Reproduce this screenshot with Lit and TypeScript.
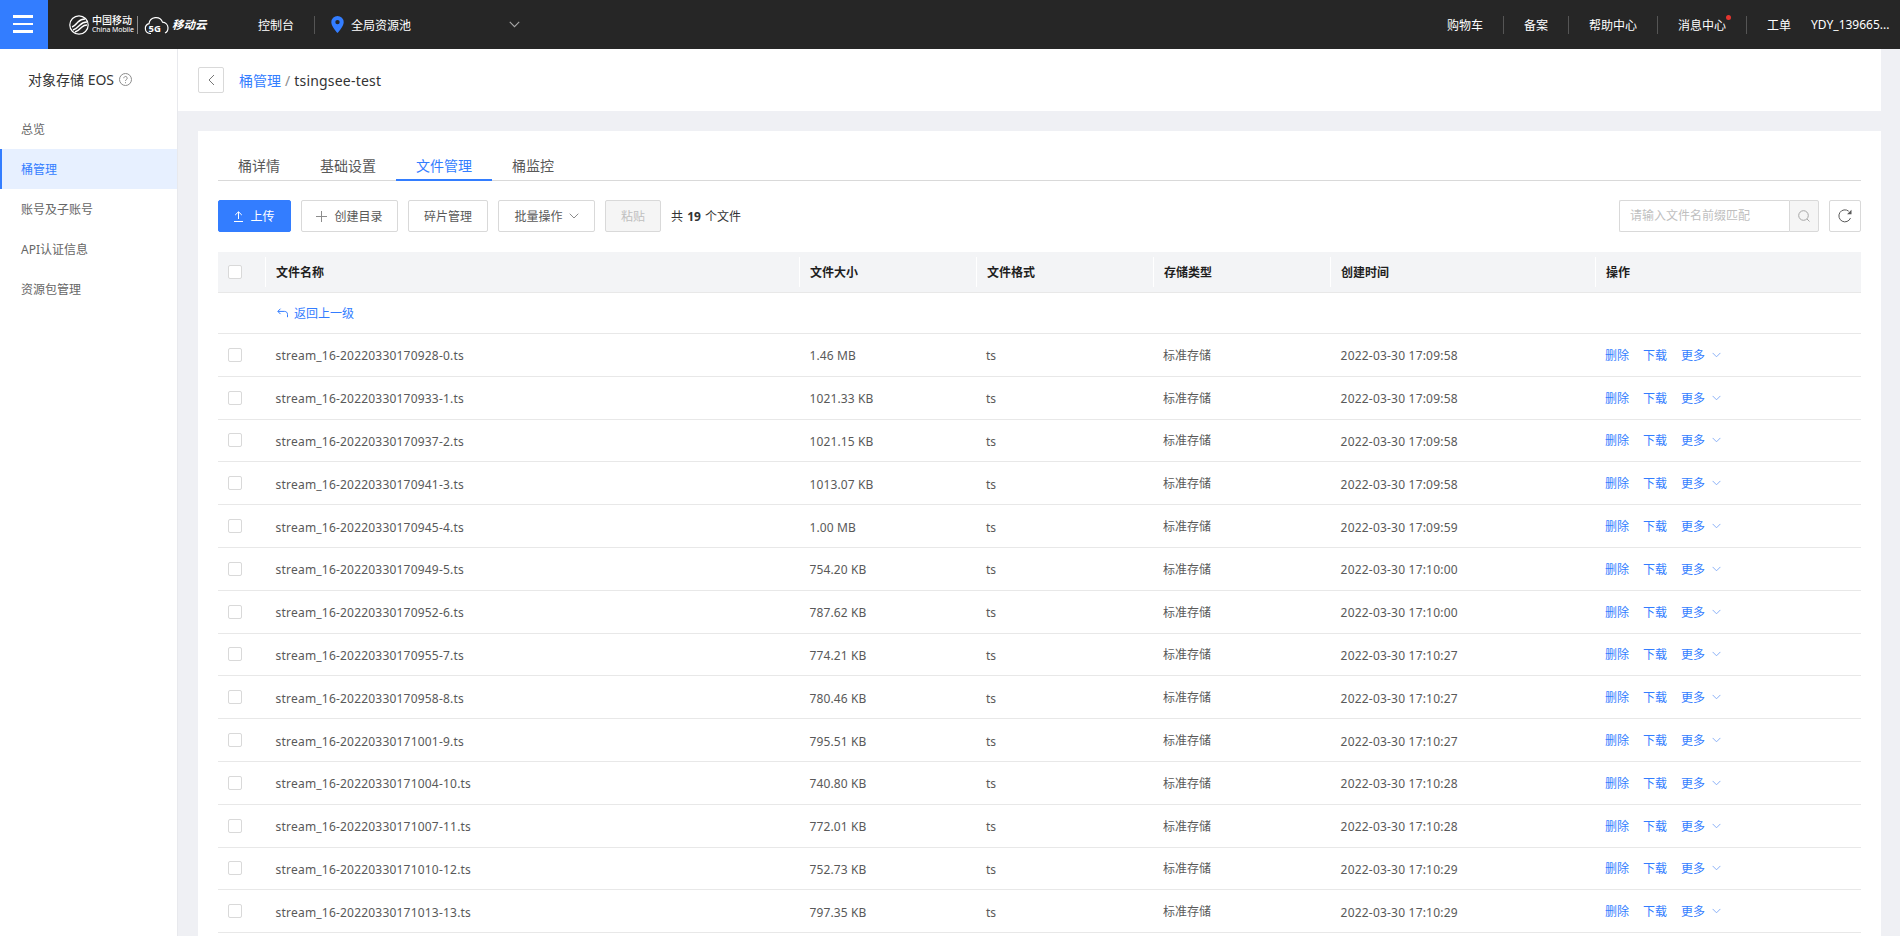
import { LitElement, html, css } from "lit";
import { customElement } from "lit/decorators.js";

const chevron = (cls: string) => html`<svg class=${cls} viewBox="0 0 10 6" fill="none" stroke="currentColor" stroke-width="1"><path d="M.7.7 5 5l4.3-4.3"/></svg>`;

const rows: [string, string, string][] = [
  ["170928-0", "1.46 MB", "17:09:58"],
  ["170933-1", "1021.33 KB", "17:09:58"],
  ["170937-2", "1021.15 KB", "17:09:58"],
  ["170941-3", "1013.07 KB", "17:09:58"],
  ["170945-4", "1.00 MB", "17:09:59"],
  ["170949-5", "754.20 KB", "17:10:00"],
  ["170952-6", "787.62 KB", "17:10:00"],
  ["170955-7", "774.21 KB", "17:10:27"],
  ["170958-8", "780.46 KB", "17:10:27"],
  ["171001-9", "795.51 KB", "17:10:27"],
  ["171004-10", "740.80 KB", "17:10:28"],
  ["171007-11", "772.01 KB", "17:10:28"],
  ["171010-12", "752.73 KB", "17:10:29"],
  ["171013-13", "797.35 KB", "17:10:29"],
];

@customElement("app-root")
export class AppRoot extends LitElement {
  static styles = css`
    :host {
      display: block;
      height: 936px;
      overflow: hidden;
      font-family: "Noto Sans", "Noto Sans CJK SC", sans-serif;
      font-size: 12px;
      color: #595959;
      background: #eff0f4;
    }
    * { box-sizing: border-box; }
    svg { display: block; flex: none; }

    .top { height: 49px; background: #262626; display: flex; align-items: center; color: #fff; }
    .menu { width: 48px; height: 49px; background: #337dff; display: flex; flex-direction: column; gap: 5px; padding: 15px 0 0 13px; flex: none; }
    .menu i { display: block; width: 20px; height: 2.5px; background: #fff; }
    .logo { display: flex; align-items: center; margin-left: 21px; width: 189px; flex: none; }
    .cm { margin-left: 3px; width: 42px; display: flex; flex-direction: column; line-height: 1; }
    .cm b { font-size: 10px; font-weight: 500; line-height: 11px; white-space: nowrap; }
    .cm span { font-size: 7px; line-height: 8px; white-space: nowrap; letter-spacing: -0.1px; }
    .lg-sep { width: 1px; height: 18px; background: #8a8a8a; margin: 0 6px 0 3px; flex: none; }
    .yun { font-size: 11.5px; font-weight: 700; font-style: italic; margin-left: 2px; white-space: nowrap; line-height: 1; }
    .tsep { width: 1px; height: 18px; background: #555; flex: none; }
    .console { width: 56px; flex: none; white-space: nowrap; }
    .region { display: flex; align-items: center; margin-left: 16px; width: 179px; flex: none; white-space: nowrap; }
    .region span { margin-left: 7px; }
    .region .chev { width: 11px; height: 7px; margin-left: 98px; color: #a8a8a8; }
    .top-right { margin-left: auto; display: flex; align-items: center; width: 473px; flex: none; white-space: nowrap; }
    .top-right .t { padding: 0 20px; position: relative; }
    .top-right .dot { position: absolute; right: 15px; top: -1px; width: 5px; height: 5px; border-radius: 50%; background: #e5352f; }
    .top-right .user { padding: 0; }

    .body { display: flex; height: 887px; }
    .side { width: 178px; flex: none; background: #fff; border-right: 1px solid #e8e9ed; }
    .side-title { height: 60px; padding: 0 0 0 28px; display: flex; align-items: center; font-size: 14px; color: #333; }
    .side-title svg { margin-left: 5px; }
    .nav { height: 40px; line-height: 41px; padding-left: 21px; color: #666; }
    .nav.on { background: #e7f0ff; color: #337dff; border-left: 2px solid #337dff; padding-left: 19px; }

    .main { flex: 1; min-width: 0; padding-right: 19px; }
    .crumb { height: 62px; background: #fff; display: flex; align-items: center; padding-left: 20px; font-size: 14px; color: #333; }
    .back { width: 26px; height: 26px; border: 1px solid #d9d9d9; border-radius: 2px; display: flex; align-items: center; justify-content: center; color: #777; margin-right: 15px; }
    .crumb a { color: #337dff; }
    .crumb em { font-style: normal; color: #8c8c8c; margin: 0 4px; }
    .crumb span { letter-spacing: 0.2px; }

    .card { margin: 20px 0 0 20px; background: #fff; padding: 20px 20px 0; height: 900px; }
    .tabs { display: flex; height: 30px; border-bottom: 1px solid #d9d9d9; font-size: 14px; color: #595959; }
    .tab { padding: 0 20px; line-height: 30px; height: 30px; margin-bottom: -1px; }
    .tab.on { color: #337dff; border-bottom: 2px solid #337dff; }

    .tools { display: flex; align-items: center; margin-top: 19px; height: 32px; }
    .btn { height: 32px; display: flex; align-items: center; justify-content: center; border: 1px solid #d9d9d9; border-radius: 2px; margin-right: 10px; color: #595959; background: #fff; flex: none; }
    .btn.up { width: 73px; background: #337dff; border-color: #337dff; color: #fff; }
    .btn.up svg { margin-right: 7px; }
    .btn.mk { width: 97px; }
    .btn.mk svg { margin-right: 7px; }
    .btn.frag { width: 80px; }
    .btn.batch { width: 97px; }
    .btn.batch .chev { width: 10px; height: 6px; margin-left: 6px; color: #8c8c8c; }
    .btn.paste { width: 56px; background: #f5f5f5; color: #bfbfbf; }
    .count { color: #333; white-space: nowrap; word-spacing: 1px; }
    .count b { font-weight: 700; }
    .search { margin-left: auto; display: flex; height: 32px; }
    .search .in { width: 170px; border: 1px solid #d9d9d9; border-right: 0; border-radius: 2px 0 0 2px; color: #bfbfbf; line-height: 30px; padding-left: 10px; }
    .search .go { width: 30px; border: 1px solid #d9d9d9; border-radius: 0 2px 2px 0; background: #f5f5f5; display: flex; align-items: center; justify-content: center; color: #a6a6a6; }
    .refresh { width: 32px; height: 32px; margin-left: 10px; border: 1px solid #d9d9d9; border-radius: 2px; display: flex; align-items: center; justify-content: center; color: #595959; }

    .table { margin-top: 20px; }
    .tr { display: grid; grid-template-columns: 47px 534px 177px 177px 177px 265px 266px; align-items: center; border-bottom: 1px solid #e8e8e8; height: 42.8px; }
    .tr > * { padding-left: 10px; white-space: nowrap; }
    .tr.head { height: 41px; background: #f3f4f6; color: #1f1f1f; font-weight: 700; }
    .tr.head > * + * { border-left: 1px solid #fff; height: 30px; line-height: 31px; }
    .tr.up-row { height: 41px; }
    .tr > .name, .tr > .date, .tr > .size { padding-left: 10.6px; padding-top: 2px; }
    .tr > .fmt { padding-top: 2px; }
    .name, .date { letter-spacing: 0.2px; }
    .size { letter-spacing: 0.1px; }
    .box { display: block; width: 14px; height: 14px; border: 1px solid #d9d9d9; border-radius: 2px; background: #fff; }
    .up-link { display: flex; align-items: center; color: #337dff; }
    .up-link svg { margin: 0 6px 0 2px; }
    .up-link span { letter-spacing: 0; }
    .ops { display: flex; align-items: center; gap: 14px; color: #337dff; }
    .ops .more { display: flex; align-items: center; gap: 7px; }
    .ops .chev { width: 9px; height: 6px; color: #7da8f5; }
  `;

  render() {
    return html`
      <div class="top">
        <div class="menu"><i></i><i></i><i></i></div>
        <div class="logo">
          <svg width="20" height="20" viewBox="0 0 20 20" fill="none" stroke="#fff">
            <circle cx="10" cy="10" r="9.2" stroke-width="1.2"/>
            <path d="M3 12c3-1 4-3 6-5s4-3 7-3M4 15c3-1 5-3 7-5s4-3 7-3M6 17c3-1 5-3 7-5s3-2 5-2" stroke-width="1.5"/>
          </svg>
          <div class="cm"><b>中国移动</b><span>China Mobile</span></div>
          <div class="lg-sep"></div>
          <svg width="26" height="20" viewBox="0 0 26 20" fill="none" stroke="#fff" stroke-width="1.2">
            <path d="M7 18.500H6a5 5 0 0 1-1-9.800 7 7 0 0 1 13.500-1.600 5.800 5.800 0 0 1 5.500 5.600c0 2.500-1 4.400-3 5.300"/>
            <text x="4.500" y="17" font-size="9.500" font-weight="700" fill="#fff" stroke="none" font-family="Noto Sans">5G</text>
          </svg>
          <span class="yun">移动云</span>
        </div>
        <div class="console">控制台</div>
        <div class="tsep"></div>
        <div class="region">
          <svg width="13" height="17" viewBox="0 0 13 17"><path fill="#337dff" fill-rule="evenodd" d="M6.500 0A6.200 6.200 0 0 0 .3 6.200C.3 10.500 6.500 17 6.500 17s6.200-6.500 6.200-10.800A6.200 6.200 0 0 0 6.500 0Zm0 8.300a2.200 2.200 0 1 1 0-4.400 2.200 2.200 0 0 1 0 4.400Z"/></svg>
          <span>全局资源池</span>
          ${chevron("chev")}
        </div>
        <div class="top-right">
          <div class="t">购物车</div><div class="tsep"></div>
          <div class="t">备案</div><div class="tsep"></div>
          <div class="t">帮助中心</div><div class="tsep"></div>
          <div class="t">消息中心<i class="dot"></i></div><div class="tsep"></div>
          <div class="t">工单</div>
          <div class="t user">YDY_139665...</div>
        </div>
      </div>
      <div class="body">
        <div class="side">
          <div class="side-title">对象存储 EOS
            <svg width="13" height="13" viewBox="0 0 13 13" fill="none" stroke="#8c8c8c"><circle cx="6.500" cy="6.500" r="6"/><path d="M4.800 5.200a1.700 1.700 0 1 1 2.600 1.400c-.6.400-.9.700-.9 1.400M6.500 9.200v1"/></svg>
          </div>
          <div class="nav">总览</div>
          <div class="nav on">桶管理</div>
          <div class="nav">账号及子账号</div>
          <div class="nav">API认证信息</div>
          <div class="nav">资源包管理</div>
        </div>
        <div class="main">
          <div class="crumb">
            <div class="back"><svg width="7" height="12" viewBox="0 0 7 12" fill="none" stroke="currentColor"><path d="M6 1 1 6l5 5"/></svg></div>
            <a>桶管理</a><em>/</em><span>tsingsee-test</span>
          </div>
          <div class="card">
            <div class="tabs">
              <div class="tab">桶详情</div>
              <div class="tab">基础设置</div>
              <div class="tab on">文件管理</div>
              <div class="tab">桶监控</div>
            </div>
            <div class="tools">
              <div class="btn up"><svg width="9" height="11" viewBox="0 0 9 11" fill="none" stroke="#fff"><path d="M4.500 8V1M1.200 4 4.500.8 7.800 4M0 10.500h9"/></svg>上传</div>
              <div class="btn mk"><svg width="11" height="11" viewBox="0 0 11 11" stroke="#8c8c8c"><path d="M5.500 0v11M0 5.500h11"/></svg>创建目录</div>
              <div class="btn frag">碎片管理</div>
              <div class="btn batch">批量操作${chevron("chev")}</div>
              <div class="btn paste">粘贴</div>
              <div class="count">共 <b>19</b> 个文件</div>
              <div class="search">
                <div class="in">请输入文件名前缀匹配</div>
                <div class="go"><svg width="12" height="12" viewBox="0 0 12 12" fill="none" stroke="currentColor"><circle cx="5.500" cy="5.500" r="4.800"/><path d="m9 9 2.500 2.500"/></svg></div>
              </div>
              <div class="refresh"><svg width="14" height="14" viewBox="0 0 14 14" fill="none" stroke="currentColor"><path d="M12.500 9A6 6 0 1 1 10.700 2.200"/><path fill="currentColor" stroke="none" d="M13.500 .8v4.400H9.100z"/></svg></div>
            </div>
            <div class="table">
              <div class="tr head">
                <div><i class="box"></i></div>
                <div>文件名称</div><div>文件大小</div><div>文件格式</div><div>存储类型</div><div>创建时间</div><div>操作</div>
              </div>
              <div class="tr up-row">
                <div></div>
                <div class="up-link">
                  <svg width="11" height="10" viewBox="0 0 11 10" fill="none" stroke="currentColor"><path d="M3.500.7 .8 3.400l2.700 2.700M1 3.400h6.500c1.800 0 3 1.200 3 3v2.800"/></svg>
                  返回上一级
                </div>
              </div>
              ${rows.map(
                ([n, size, t]) => html`
                  <div class="tr">
                    <div><i class="box"></i></div>
                    <div class="name">stream_16-20220330${n}.ts</div>
                    <div class="size">${size}</div>
                    <div class="fmt">ts</div>
                    <div>标准存储</div>
                    <div class="date">2022-03-30 ${t}</div>
                    <div class="ops"><span>删除</span><span>下载</span><span class="more">更多${chevron("chev")}</span></div>
                  </div>`
              )}
            </div>
          </div>
        </div>
      </div>
    `;
  }
}
